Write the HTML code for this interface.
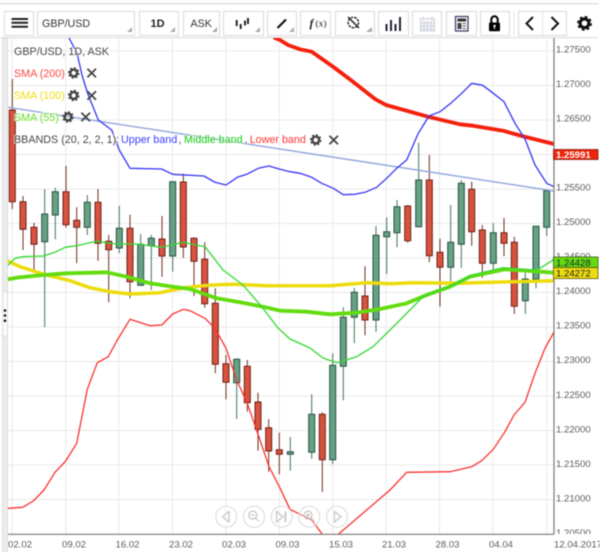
<!DOCTYPE html>
<html>
<head>
<meta charset="utf-8">
<style>
html,body{margin:0;padding:0;background:#fff;width:600px;height:552px;overflow:hidden}
svg{display:block;filter:blur(.4px)}
text{font-family:"Liberation Sans",sans-serif}
.btn{fill:#fff;stroke:#e2e2e2;stroke-width:1.4}
.tri{fill:#aaa}
.grid{stroke:#e9e9e9;stroke-width:1;fill:none}
.ax{font-size:9.6px;fill:#5c5c5c}
.lg{font-size:10.75px;paint-order:stroke;stroke:#fff;stroke-width:1.6px;stroke-opacity:.75}
.ln{fill:none;stroke-linejoin:round;stroke-linecap:round}
.navc{fill:#fff;fill-opacity:.35;stroke:#dedede;stroke-width:1.2}
.navi{fill:none;stroke:#c4c4c4;stroke-width:1.2}
</style>
</head>
<body>
<svg width="600" height="552" viewBox="0 0 600 552" xmlns="http://www.w3.org/2000/svg">
<defs>
<clipPath id="plot"><rect x="8" y="38" width="546" height="496"/></clipPath>
<clipPath id="axc"><rect x="555" y="38" width="45" height="496"/></clipPath>
<g id="gear"><circle r="3.4" fill="none" stroke="currentColor" stroke-width="2.4"/><circle r="4.9" fill="none" stroke="currentColor" stroke-width="1.8" stroke-dasharray="2 1.85"/></g>
<g id="xx"><path d="M-4.3-4.3L4.3 4.3M4.3-4.3L-4.3 4.3" fill="none" stroke="currentColor" stroke-width="1.8"/></g>
</defs>
<rect width="600" height="552" fill="#fff"/>

<!-- top chrome -->
<rect x="0" y="3" width="598" height="1.4" fill="#dcdcdc"/>
<rect x="0" y="37" width="598" height="1.2" fill="#dedede"/>

<!-- toolbar -->
<rect class="btn" x="4.5" y="11.5" width="29" height="24"/>
<rect class="btn" x="37.5" y="11.5" width="97" height="24"/>
<rect class="btn" x="139.5" y="11.5" width="39" height="24"/>
<rect class="btn" x="183.5" y="11.5" width="36" height="24"/>
<rect class="btn" x="223.5" y="11.5" width="40" height="24"/>
<rect class="btn" x="267.5" y="11.5" width="29" height="24"/>
<rect class="btn" x="300.5" y="11.5" width="30" height="24"/>
<rect class="btn" x="335.5" y="11.5" width="39" height="24"/>
<rect class="btn" x="378.5" y="11.5" width="30" height="24"/>
<rect class="btn" x="412.5" y="11.5" width="29" height="24"/>
<rect class="btn" x="446.5" y="11.5" width="30" height="24"/>
<rect class="btn" x="480.5" y="11.5" width="29" height="24"/>
<rect x="513.5" y="11" width="1" height="25" fill="#e2e2e2"/>
<rect class="btn" x="518.5" y="11.5" width="48" height="24"/>
<rect x="542" y="11" width="1" height="25" fill="#e2e2e2"/>
<path class="tri" d="M132 27V32H127ZM175 27V32H170ZM217 27V32H212ZM260 27V32H255ZM294 27V32H289ZM372 27V32H366Z"/>
<path d="M11.5 19H28M11.5 22.8H28M11.5 26.7H28" stroke="#222" stroke-width="2" fill="none"/>
<text x="42" y="27" font-size="10.7" fill="#333">GBP/USD</text>
<text x="150.5" y="27" font-size="11" font-weight="bold" fill="#222">1D</text>
<text x="190.5" y="27" font-size="10.7" fill="#333">ASK</text>
<path d="M236.7 20V26M240.7 24V29M245 20.5V25.5M248 18V24" stroke="#111" stroke-width="1.8" fill="none"/>
<path d="M277.5 28L286 19.5" stroke="#111" stroke-width="2.2" fill="none"/>
<text x="309.5" y="27" font-size="12" font-style="italic" font-weight="bold" fill="#222" style="font-family:'Liberation Serif',serif">f</text>
<text x="315.5" y="26.5" font-size="9.5" fill="#222" style="font-family:'Liberation Serif',serif">(x)</text>
<circle cx="353.3" cy="22.5" r="5.2" fill="none" stroke="#222" stroke-width="1.4" stroke-dasharray="2.6 1"/>
<path d="M348 17L359 28" stroke="#111" stroke-width="1.3" fill="none"/>
<path d="M386.5 24V31M391 20V31M395.5 24V31M400 17V31" stroke="#223" stroke-width="2" fill="none"/>
<rect x="420.5" y="18.5" width="14" height="12.5" fill="#f4f5f8" stroke="#ccd0da"/>
<path d="M423 16V20M432 16V20M421 23H434M421 26H434M421 29H434M424 21V31M427.5 21V31M431 21V31" stroke="#d2d5de" stroke-width="1" fill="none"/>
<rect x="455.5" y="16.5" width="12.5" height="14.5" fill="#f7f7f7" stroke="#4a3f70" stroke-width="1.3"/>
<rect x="457.5" y="18.5" width="8.5" height="3" fill="#333"/>
<rect x="457.5" y="23" width="4" height="6" fill="#444"/>
<path d="M462.5 23.5H466M462.5 26H466M462.5 28.5H466" stroke="#666" fill="none"/>
<path d="M491.3 23V19.5a3.2 3.2 0 0 1 6.4 0V23" fill="none" stroke="#000" stroke-width="2"/>
<rect x="489" y="22.5" width="11" height="8.8" rx="1.3" fill="#000"/>
<circle cx="494.5" cy="26" r="1.2" fill="#fff"/><rect x="494" y="26" width="1" height="3" fill="#fff"/>
<path d="M533 17L526.5 23.5L533 30M551.5 17L558 23.5L551.5 30" stroke="#111" stroke-width="2" fill="none"/>
<g color="#111" transform="translate(584.5 23.3) scale(1.28)"><use href="#gear"/></g>

<!-- left strip -->
<rect x="2.5" y="38" width="5" height="514" fill="#ececec" stroke="#d8d8d8" stroke-width=".8"/>
<rect x="2.5" y="291.7" width="5" height="44.5" fill="#fafafa" stroke="#d8d8d8" stroke-width=".8"/>
<circle cx="5" cy="310.5" r="1.3" fill="#111"/><circle cx="5" cy="315.5" r="1.3" fill="#111"/><circle cx="5" cy="320.7" r="1.3" fill="#111"/>

<!-- grid -->
<path class="grid" d="M12 38V534M65.7 38V534M118.7 38V534M172.4 38V534M225.8 38V534M279.3 38V534M332.8 38V534M386 38V534M439.5 38V534M492.8 38V534M546.7 38V534"/>
<path class="grid" d="M8 51H554M8 85.5H554M8 120H554M8 154.5H554M8 189H554M8 223.5H554M8 258H554M8 292.5H554M8 327H554M8 361.5H554M8 396H554M8 430.5H554M8 465H554M8 499.5H554"/>

<g clip-path="url(#plot)">
<!-- wicks -->
<path fill="none" stroke="#6f2b20" stroke-width="1" d="M12.3 79V209M23 196V250M34 222.7V272.7M66 165.7V227.7M76.7 207.3V263.3M98 189V260.7M108.7 235V302.3M130 214.7V298.3M162 216V276.7M183.3 173.7V257.7M194 237.3V296M204.7 242.3V307.7M215.3 288.3V373.3M226 355V399.3M247.3 360V411.7M258 392.7V450.7M268.7 419.3V471.7M279.3 432.7V474.3M322.3 412.3V492M365 266.3V335.3M407.7 205V242.7M429.3 155V262.3M440 238.7V306.7M471.7 181.7V245.7M482.3 225V277.7M504 218V256M514.3 236.7V314"/>
<path fill="none" stroke="#44705c" stroke-width="1" d="M44.7 189.3V327.3M55.3 187.7V239.3M87.3 195V235M119.3 205.7V253.3M140.7 234V286M151.3 235V290M172.7 181V271.7M236.7 358.3V419M290.3 437V470.7M311.7 394.3V459M332.7 353.3V464.3M343.3 307.3V400.3M354.3 287.7V343.3M376 226V331.7M386.7 217.3V274M397 200V247.3M418.7 142.7V227.3M450.7 205V281.7M461.3 180V267.7M493.3 223.3V272.7M525.3 272.7V314M536 226V288.3M546.7 189.3V236"/>
<!-- bodies -->
<path fill="#d8533f" stroke="#6e2015" stroke-width="1" d="M9.3 110h6V201.7h-6zM20 201.7h6V229.3h-6zM31 227.3h6V244.3h-6zM63 191.7h6V224.7h-6zM73.7 220.3h6V227.3h-6zM95 202.3h6V243.3h-6zM105.7 241.3h6V249.7h-6zM127 228.3h6V281.7h-6zM159 239h6V256h-6zM180.3 182h6V247h-6zM191 238.3h6V261.3h-6zM201.7 259.3h6V303.7h-6zM212.3 303.3h6V364.3h-6zM223 363.7h6V382.3h-6zM244.3 366.3h6V402.7h-6zM255 402h6V429.3h-6zM265.7 427.7h6V451h-6zM276.3 449.7h6V454.3h-6zM319.3 414.3h6V459.7h-6zM362 296h6V320h-6zM404.7 206h6V240.7h-6zM426.3 180h6V255.7h-6zM437 252.3h6V267.3h-6zM468.7 189.3h6V231.7h-6zM479.3 230h6V263.3h-6zM501 232.7h6V243.3h-6zM511.3 242.3h6V306.3h-6z"/>
<path fill="#66a285" stroke="#28523f" stroke-width="1" d="M41.7 214h6V241.7h-6zM52.3 191.7h6V215h-6zM84.3 202.3h6V227.3h-6zM116.3 228.3h6V248h-6zM137.7 244.3h6V285.3h-6zM148.3 238.3h6V245.7h-6zM169.7 181.7h6V256h-6zM233.7 359.3h6V382.7h-6zM287.3 451.7h6V454.3h-6zM308.7 414.3h6V452.3h-6zM329.7 365.3h6V459.7h-6zM340.3 317.3h6V366.3h-6zM351.3 292.3h6V317.3h-6zM373 235.3h6V320h-6zM383.7 231.7h6V236.7h-6zM394 206.7h6V232.7h-6zM415.7 180h6V226.7h-6zM447.7 242.3h6V267.3h-6zM458.3 183.3h6V244.3h-6zM490.3 232.7h6V263.3h-6zM522.3 279h6V300.7h-6zM533 226.3h6V279.3h-6zM543.7 190.7h6V227.3h-6z"/>

<!-- trend line -->
<path class="ln" stroke="#8fa6dc" stroke-width="1.4" d="M8 107.3L554 191"/>
<!-- SMA 200 -->
<path class="ln" stroke="#f4200c" stroke-width="3.8" d="M275 38L280 40L288 45L300 49.3L311.7 51.7L333 66.7L353 81.7L375 99L386 105L428 116.7L460 124.3L473 125.7L503 130.7L521.7 136L554 144"/>
<!-- SMA 100 -->
<path class="ln" stroke="#ecdc0e" stroke-width="3.5" d="M7.3 260.7L20 266.7L43 274L70 280.7L90 287.7L110 291.7L130 294L160 292.7L183 288L200 286L213 285L233 284.3L267 285.7L330 285.7L367 282.7L390 283.7L413 282.7L460 283.3L513 281.7L554 280.7"/>
<!-- SMA 55 -->
<path class="ln" stroke="#62dc0e" stroke-width="3.8" d="M7.3 279.3L20 277.3L43 275L66.7 273.3L106.7 272.3L126.7 276.7L150 283.3L173 286.7L190 289L216.7 298.3L240 302.3L263 306.7L280 310.7L306.7 311.7L330 314.3L356.7 312.7L380 309L406.7 303.3L426.7 295L450 286.7L470 276.7L505 269.3L526.7 270.7L554 272.7"/>
<!-- middle band -->
<path class="ln" stroke="#33d833" stroke-width="1.3" d="M7.3 266L15 258.3L23.3 256.7L43.3 256L55 252.3L65 247.3L76.7 245.7L96.7 241.3L116.7 244L136.7 244L161.7 247.3L183.3 242.3L205 246.7L223 270L243 285L261.7 306.7L278 328L290 339L310 348L323 358L336.7 362.7L356.7 356.7L373 346.7L390 330L400 320L423 296.7L456.7 283.3L471.7 275L503 267.7L533 270L540 268.3L554 259.3"/>
<!-- upper band -->
<path class="ln" stroke="#3636f5" stroke-width="1.3" d="M69 38L77 53L82 75L87.5 93L98.3 120L111.7 130L119.3 150L130 168.3L161.7 169L172.7 174.3L204 176L215 182.3L226 185L237.3 177.3L246.7 174.3L258.3 168.3L269 166L280 169.3L290 171.7L300 173.3L311.7 177.3L321.7 183.3L333.3 188.3L343.3 194.7L355 194.3L365 192.3L376.7 187.3L386.7 178.3L396.7 168.3L406.7 160L418.3 133.3L429 116L440 111.7L450.7 103.3L461.7 93.3L471.7 83.3L482.7 85.3L493.3 93.3L504 101.7L515 123.3L525 139L535 165L546.7 183.3L554 186.7"/>
<!-- lower band -->
<path class="ln" stroke="#f93232" stroke-width="1.3" d="M8 508.3L22.7 507.3L33.3 501L44 490L55 472.3L65.7 461L76.7 443.3L87.3 389.3L97.3 362.7L108.3 356.7L117.3 340L130 319.3L150 325.7L161.7 325L172.7 314L183.3 309.3L190 310.7L205 318.3L215 328.3L226 348.3L236.7 380L247.3 403.3L258.3 435L269 466.7L279.3 486.7L290 509.3L311.7 520L325 538L334 538L390 490L406.7 472.3L450 471.7L471.7 466.7L481.7 460.7L493.3 449.3L505 431.7L514 415L525 402.3L535 373.3L545 348.3L554 332"/>
</g>

<!-- axes -->
<path d="M554 38V534M8 534.3H554" fill="none" stroke="#777" stroke-width="1.2"/>

<!-- nav -->
<circle class="navc" cx="226.3" cy="516.7" r="10.5"/>
<circle class="navc" cx="254" cy="516.7" r="10.5"/>
<circle class="navc" cx="281.7" cy="516.7" r="10.5"/>
<circle class="navc" cx="309.3" cy="516.7" r="10.5"/>
<circle class="navc" cx="337" cy="516.7" r="10.5"/>
<path class="navi" d="M229 511.5L222.5 516.7L229 522Z"/>
<circle class="navi" cx="252.7" cy="515" r="4"/><path class="navi" d="M250.8 515H254.6M255.6 518L259 521.5"/>
<path class="navi" d="M276.5 511.5L283 516.7L276.5 522Z"/><rect x="284.3" y="511.5" width="2.2" height="10.5" fill="#cfcfcf"/>
<circle class="navi" cx="308" cy="515" r="4"/><path class="navi" d="M306 515H310M308 513V517M311 518L314.3 521.5"/>
<path class="navi" d="M334.5 511.5L341 516.7L334.5 522Z"/>

<!-- right labels -->
<g class="ax" clip-path="url(#axc)">
<text x="556" y="52.5">1.27500</text>
<text x="556" y="87">1.27000</text>
<text x="556" y="121.5">1.26500</text>
<text x="556" y="190.5">1.25500</text>
<text x="556" y="225">1.25000</text>
<text x="556" y="259.5">1.24500</text>
<text x="556" y="294">1.24000</text>
<text x="556" y="328.5">1.23500</text>
<text x="556" y="363">1.23000</text>
<text x="556" y="398">1.22500</text>
<text x="556" y="432.5">1.22000</text>
<text x="556" y="467">1.21500</text>
<text x="556" y="501.5">1.21000</text>
<text x="556" y="536">1.20500</text>
</g>
<rect x="553.5" y="149.5" width="44.5" height="10" fill="#f02408" stroke="#7a1a10" stroke-width=".8"/>
<text x="556" y="158" font-size="9.6" font-weight="bold" fill="#fff">1.25991</text>
<rect x="553.5" y="257" width="44.5" height="10.6" fill="#66dc10" stroke="#3c5a18" stroke-width=".8"/>
<text x="556" y="265.8" font-size="9.6" fill="#123">1.24428</text>
<rect x="553.5" y="267.6" width="44.5" height="11" fill="#ecdc10" stroke="#5f5a18" stroke-width=".8"/>
<text x="556" y="276.6" font-size="9.6" fill="#222">1.24272</text>

<!-- date labels -->
<g class="ax">
<text x="8" y="547.5">02.02</text>
<text x="62" y="547.5">09.02</text>
<text x="115.5" y="547.5">16.02</text>
<text x="169" y="547.5">23.02</text>
<text x="222" y="547.5">02.03</text>
<text x="275.5" y="547.5">09.03</text>
<text x="329" y="547.5">15.03</text>
<text x="382" y="547.5">21.03</text>
<text x="435.5" y="547.5">28.03</text>
<text x="489" y="547.5">04.04</text>
<text x="554" y="547.5">12.04.2017</text>
</g>

<!-- legend -->
<text class="lg" x="14" y="55" fill="#444">GBP/USD, 1D, ASK</text>
<text class="lg" x="14" y="77" fill="#ff4444">SMA (200)</text>
<text class="lg" x="14" y="99" fill="#eedc10">SMA (100)</text>
<text class="lg" x="14" y="121" fill="#66dd22">SMA (55)</text>
<text class="lg" x="14" y="143" fill="#444">BBANDS (20, 2, 2, 1):</text>
<text class="lg" x="121" y="143" fill="#3d3dff">Upper band</text>
<text class="lg" x="178.5" y="143" fill="#444">,</text>
<text class="lg" x="184" y="143" fill="#11cc11">Middle band</text>
<text class="lg" x="244.5" y="143" fill="#444">,</text>
<text class="lg" x="249.7" y="143" fill="#ff3333">Lower band</text>
<g color="#444">
<use href="#gear" x="73.7" y="73"/><use href="#xx" x="91.7" y="73"/>
<use href="#gear" x="73.7" y="95.5"/><use href="#xx" x="91.7" y="95.5"/>
<use href="#gear" x="68" y="117"/><use href="#xx" x="85.7" y="117"/>
<use href="#gear" x="315.7" y="140"/><use href="#xx" x="333.7" y="140"/>
</g>
</svg>
</body>
</html>
